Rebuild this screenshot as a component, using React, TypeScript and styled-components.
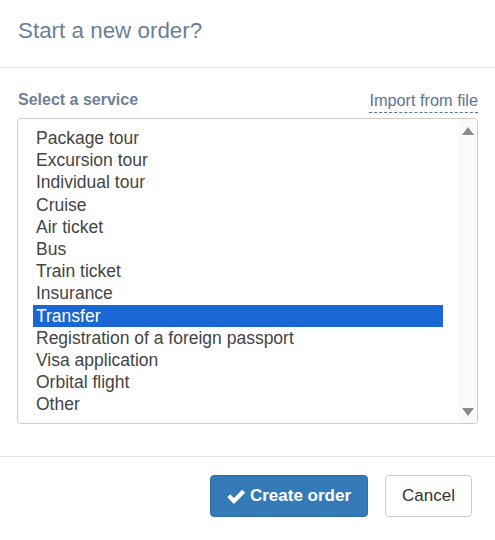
import React, { useState } from 'react';
import styled, { createGlobalStyle } from 'styled-components';

// == styles =======================================================================================
const GlobalStyle = createGlobalStyle`
  html, body {
    margin: 0;
    padding: 0;
    background: #fff;
    font-family: "Liberation Sans", Arial, sans-serif;
  }
`;

const Modal = styled.div`
  width: 495px;
  height: 540px;
  display: flex;
  flex-direction: column;
  background: #fff;
`;

const Header = styled.div`
  height: 68px;
  padding: 0 18px;
  display: flex;
  align-items: center;
  border-bottom: 1px solid #e5e5e5;
  box-sizing: border-box;
`;

const Title = styled.h4`
  margin: 0;
  font-size: 22.4px;
  font-weight: normal;
  color: #6b7e97;
  line-height: 1;
  padding-bottom: 5px;
`;

const Body = styled.div`
  padding: 19px 17px 32px;
`;

const LabelRow = styled.div`
  height: 26px;
  margin-bottom: 5px;
  display: flex;
  justify-content: space-between;
  align-items: center;
`;

const Label = styled.label`
  font-size: 16px;
  font-weight: bold;
  color: #6f8196;
  padding-left: 1px;
`;

const ImportLink = styled.a`
  font-size: 16.3px;
  line-height: 24px;
  color: #5b7394;
  text-decoration: none;
  border-bottom: 1px dashed #5b7394;
  cursor: pointer;
`;

const ListBox = styled.div`
  height: 306px;
  border: 1px solid #ccc;
  border-radius: 4px;
  box-sizing: border-box;
  display: flex;
  overflow: hidden;
`;

const Options = styled.div`
  flex: 1;
  padding: 8px 15px 0 15px;
`;

const Option = styled.div<{ selected: boolean }>`
  height: 22.2px;
  line-height: 22px;
  padding-left: 3px;
  font-size: 17.5px;
  color: ${ ( { selected } ) => ( selected ? '#fff' : '#444' ) };
  background: ${ ( { selected } ) => ( selected ? '#1967d2' : 'transparent' ) };
  cursor: default;
  white-space: nowrap;
`;

const ScrollTrack = styled.div`
  width: 19px;
  background: #fafafa;
  display: flex;
  flex-direction: column;
  justify-content: space-between;
  align-items: center;
  padding: 8px 0 7px;
`;

const Arrow = styled.div<{ down?: boolean }>`
  width: 0;
  height: 0;
  border-left: 6px solid transparent;
  border-right: 6px solid transparent;
  ${ ( { down } ) => (
    down
      ? 'border-top: 8px solid #8a8a8a;'
      : 'border-bottom: 8px solid #8a8a8a;'
  ) }
`;

const Footer = styled.div`
  border-top: 1px solid #e5e5e5;
  padding: 18px 23px 0 17px;
  display: flex;
  justify-content: flex-end;
  gap: 17px;
`;

const Button = styled.button<{ primary?: boolean }>`
  height: 42px;
  padding: 0 16px;
  border-radius: 4px;
  font-family: "Liberation Sans", Arial, sans-serif;
  font-size: 17px;
  display: flex;
  align-items: center;
  gap: 4px;
  cursor: pointer;
  border: 1px solid ${ ( { primary } ) => ( primary ? '#2e6da4' : '#ccc' ) };
  background: ${ ( { primary } ) => ( primary ? '#337ab7' : '#fff' ) };
  color: ${ ( { primary } ) => ( primary ? '#fff' : '#333' ) };
  font-weight: ${ ( { primary } ) => ( primary ? 'bold' : 'normal' ) };
`;

// == data =========================================================================================
const services = [
  'Package tour',
  'Excursion tour',
  'Individual tour',
  'Cruise',
  'Air ticket',
  'Bus',
  'Train ticket',
  'Insurance',
  'Transfer',
  'Registration of a foreign passport',
  'Visa application',
  'Orbital flight',
  'Other',
];

// == components ===================================================================================
function CheckIcon(): JSX.Element {
  return (
    <svg width="19" height="17" viewBox="0 0 18 16">
      <path d="M0.3 8.6 L3 5.9 L6.6 9.5 L14.4 1.7 L17.2 4.4 L6.6 15 Z" fill="#fff" />
    </svg>
  );
}

export default function App(): JSX.Element {
  const [ selected, setSelected ] = useState( 'Transfer' );

  return (
    <Modal>
      <GlobalStyle />
      <Header>
        <Title>Start a new order?</Title>
      </Header>
      <Body>
        <LabelRow>
          <Label>Select a service</Label>
          <ImportLink>Import from file</ImportLink>
        </LabelRow>
        <ListBox>
          <Options>
            { services.map( ( s ) => (
              <Option key={ s } selected={ s === selected } onClick={ () => setSelected( s ) }>
                { s }
              </Option>
            ) ) }
          </Options>
          <ScrollTrack>
            <Arrow />
            <Arrow down />
          </ScrollTrack>
        </ListBox>
      </Body>
      <Footer>
        <Button primary>
          <CheckIcon />
          Create order
        </Button>
        <Button>Cancel</Button>
      </Footer>
    </Modal>
  );
}
